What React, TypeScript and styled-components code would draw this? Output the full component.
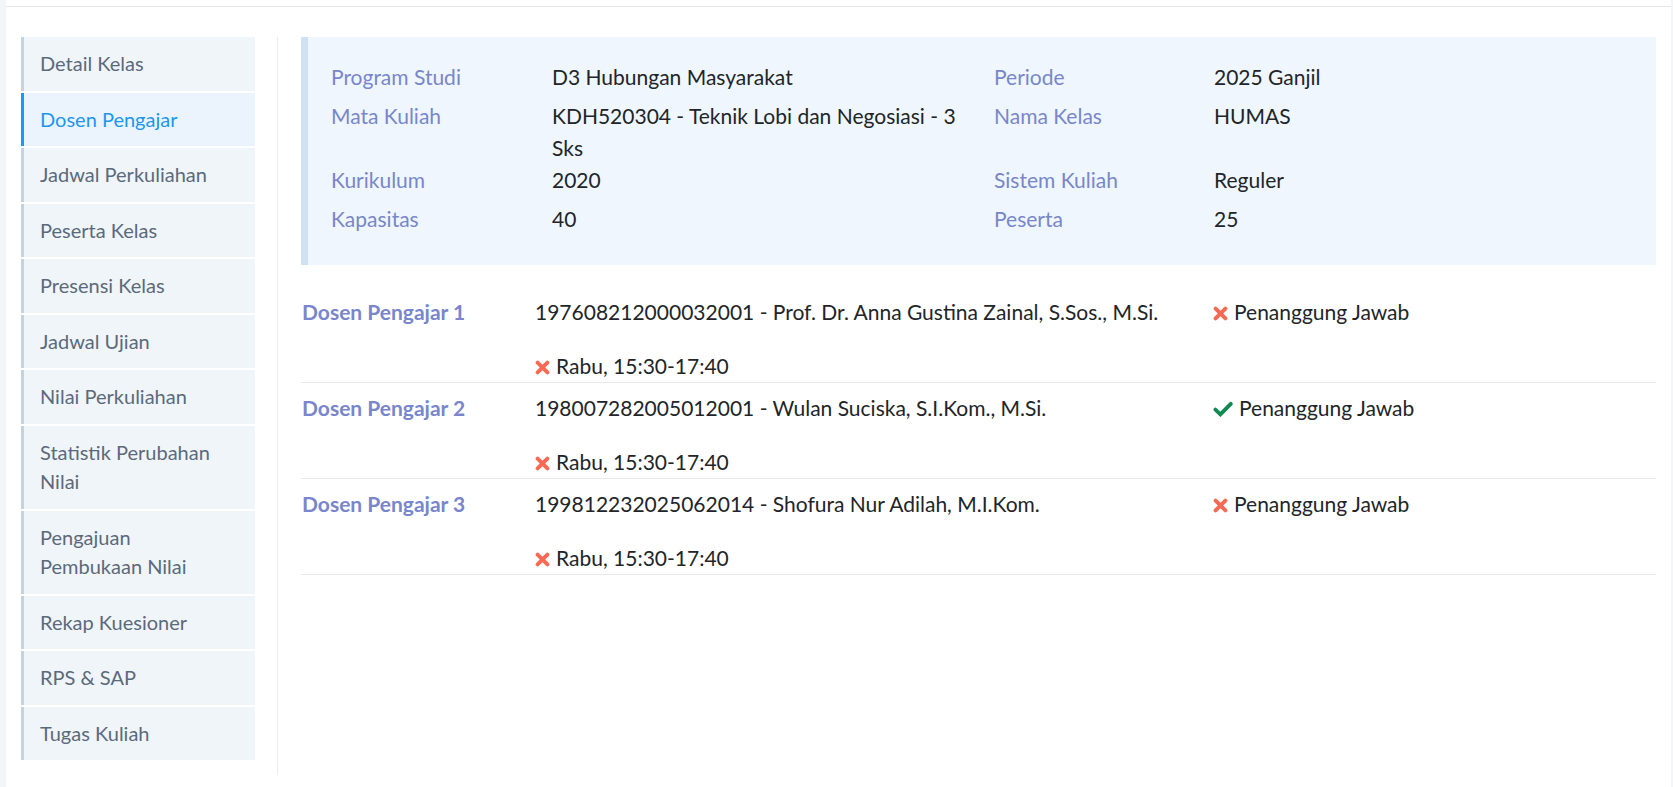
import styled, { createGlobalStyle } from 'styled-components'

const GlobalStyle = createGlobalStyle`
  html, body {
    margin: 0;
    padding: 0;
    background: #f4f5f6;
    font-family: Lato, "Source Sans Pro", "Liberation Sans", sans-serif;
    color: #222;
  }
  * { box-sizing: border-box; }
`

const menu = [
  'Detail Kelas',
  'Dosen Pengajar',
  'Jadwal Perkuliahan',
  'Peserta Kelas',
  'Presensi Kelas',
  'Jadwal Ujian',
  'Nilai Perkuliahan',
  'Statistik Perubahan Nilai',
  'Pengajuan Pembukaan Nilai',
  'Rekap Kuesioner',
  'RPS & SAP',
  'Tugas Kuliah',
]

const info = [
  ['Program Studi', 'D3 Hubungan Masyarakat', 'Periode', '2025 Ganjil'],
  ['Mata Kuliah', 'KDH520304 - Teknik Lobi dan Negosiasi - 3 Sks', 'Nama Kelas', 'HUMAS'],
  ['Kurikulum', '2020', 'Sistem Kuliah', 'Reguler'],
  ['Kapasitas', '40', 'Peserta', '25'],
]

const dosen = [
  { nip: '197608212000032001', nama: 'Prof. Dr. Anna Gustina Zainal, S.Sos., M.Si.', pj: false },
  { nip: '198007282005012001', nama: 'Wulan Suciska, S.I.Kom., M.Si.', pj: true },
  { nip: '199812232025062014', nama: 'Shofura Nur Adilah, M.I.Kom.', pj: false },
]

// fa-times style cross
function Cross() {
  return (
    <CrossSvg viewBox="0 0 15 15">
      <path d="M2.6 2.6 L12.4 12.4 M12.4 2.6 L2.6 12.4" stroke="currentColor" strokeWidth="3.9" strokeLinecap="round" fill="none" />
    </CrossSvg>
  )
}

// fa-check style tick
function Check() {
  return (
    <CheckSvg viewBox="0 0 20 16">
      <path d="M2.4 8.6 L7.4 13.4 L17.8 2.8" stroke="currentColor" strokeWidth="3.8" strokeLinecap="round" strokeLinejoin="miter" fill="none" />
    </CheckSvg>
  )
}

export default function App() {
  return (
    <>
      <GlobalStyle />
      <Page>
        <TopBar />
        <Card>
          <Sidebar>
            {menu.map((item) => (
              <MenuItem key={item} $active={item === 'Dosen Pengajar'}>{item}</MenuItem>
            ))}
          </Sidebar>

          <Main>
            <InfoPanel>
              {info.map(([l1, v1, l2, v2]) => (
                <InfoRow key={l1}>
                  <InfoLabel>{l1}</InfoLabel>
                  <InfoValue>{v1}</InfoValue>
                  <InfoLabel>{l2}</InfoLabel>
                  <InfoValue>{v2}</InfoValue>
                </InfoRow>
              ))}
            </InfoPanel>

            <DosenList>
              {dosen.map((d, i) => (
                <DosenRow key={d.nip}>
                  <DosenTitle>Dosen Pengajar {i + 1}</DosenTitle>
                  <div>
                    <div>{d.nip} - {d.nama}</div>
                    <Schedule>
                      <Cross />Rabu, 15:30-17:40
                    </Schedule>
                  </div>
                  <div>
                    {d.pj ? <Check /> : <Cross />}Penanggung Jawab
                  </div>
                </DosenRow>
              ))}
            </DosenList>
          </Main>
        </Card>
      </Page>
    </>
  )
}

const Page = styled.div`
  min-height: 787px;
  padding: 0 2px 0 6px;
`

const TopBar = styled.div`
  height: 7px;
  background: #fff;
  border-bottom: 1px solid #e6e7e8;
`

const Card = styled.div`
  display: flex;
  background: #fff;
  padding: 30px 15px 10px 15px;
  min-height: 780px;
`

const Sidebar = styled.nav`
  width: 257px;
  flex-shrink: 0;
  display: flex;
  flex-direction: column;
  gap: 2px;
  padding-right: 22px;
  padding-bottom: 15px;
  border-right: 1px solid #ececec;
  align-self: flex-start;
`

const MenuItem = styled.div<{ $active?: boolean }>`
  background: ${(p) => (p.$active ? '#ebf4fc' : '#f0f5fa')};
  border-left: 3px solid ${(p) => (p.$active ? '#1b98f5' : '#c3d3e0')};
  color: ${(p) => (p.$active ? '#1e96f0' : '#5b6a7a')};
  font-size: 20px;
  line-height: 29.5px;
  padding: 12px 22px 12px 16px;
`

const Main = styled.main`
  flex: 1;
  padding-left: 23px;
`

const InfoPanel = styled.section`
  background: #eff6fd;
  border-left: 7px solid #cfe2f3;
  padding: 24px 23px 23px 23px;
`

const InfoRow = styled.div`
  display: grid;
  grid-template-columns: 221px 442px 220px 1fr;
  font-size: 21px;
  line-height: 32px;
`

const InfoLabel = styled.div`
  color: #7986cb;
  padding-bottom: 7px;
`

const InfoValue = styled.div`
  color: #212529;
  padding-right: 30px;
`

const DosenList = styled.div`
  margin-top: 22px;
`

const DosenRow = styled.div`
  display: grid;
  grid-template-columns: 233px 678px 1fr;
  font-size: 21px;
  line-height: 32px;
  color: #212529;
  padding-top: 9px;
  border-bottom: 1px solid #e7e9eb;
  padding-left: 1px;
`

const DosenTitle = styled.div`
  color: #7986cb;
  font-weight: 700;
`

const Schedule = styled.div`
  margin-top: 22px;
`

const CrossSvg = styled.svg`
  color: #f96a55;
  width: 15px;
  height: 15px;
  margin-right: 6px;
  vertical-align: -1px;
`

const CheckSvg = styled.svg`
  color: #0f8a50;
  width: 20px;
  height: 16px;
  margin-right: 6px;
  vertical-align: -1px;
`
